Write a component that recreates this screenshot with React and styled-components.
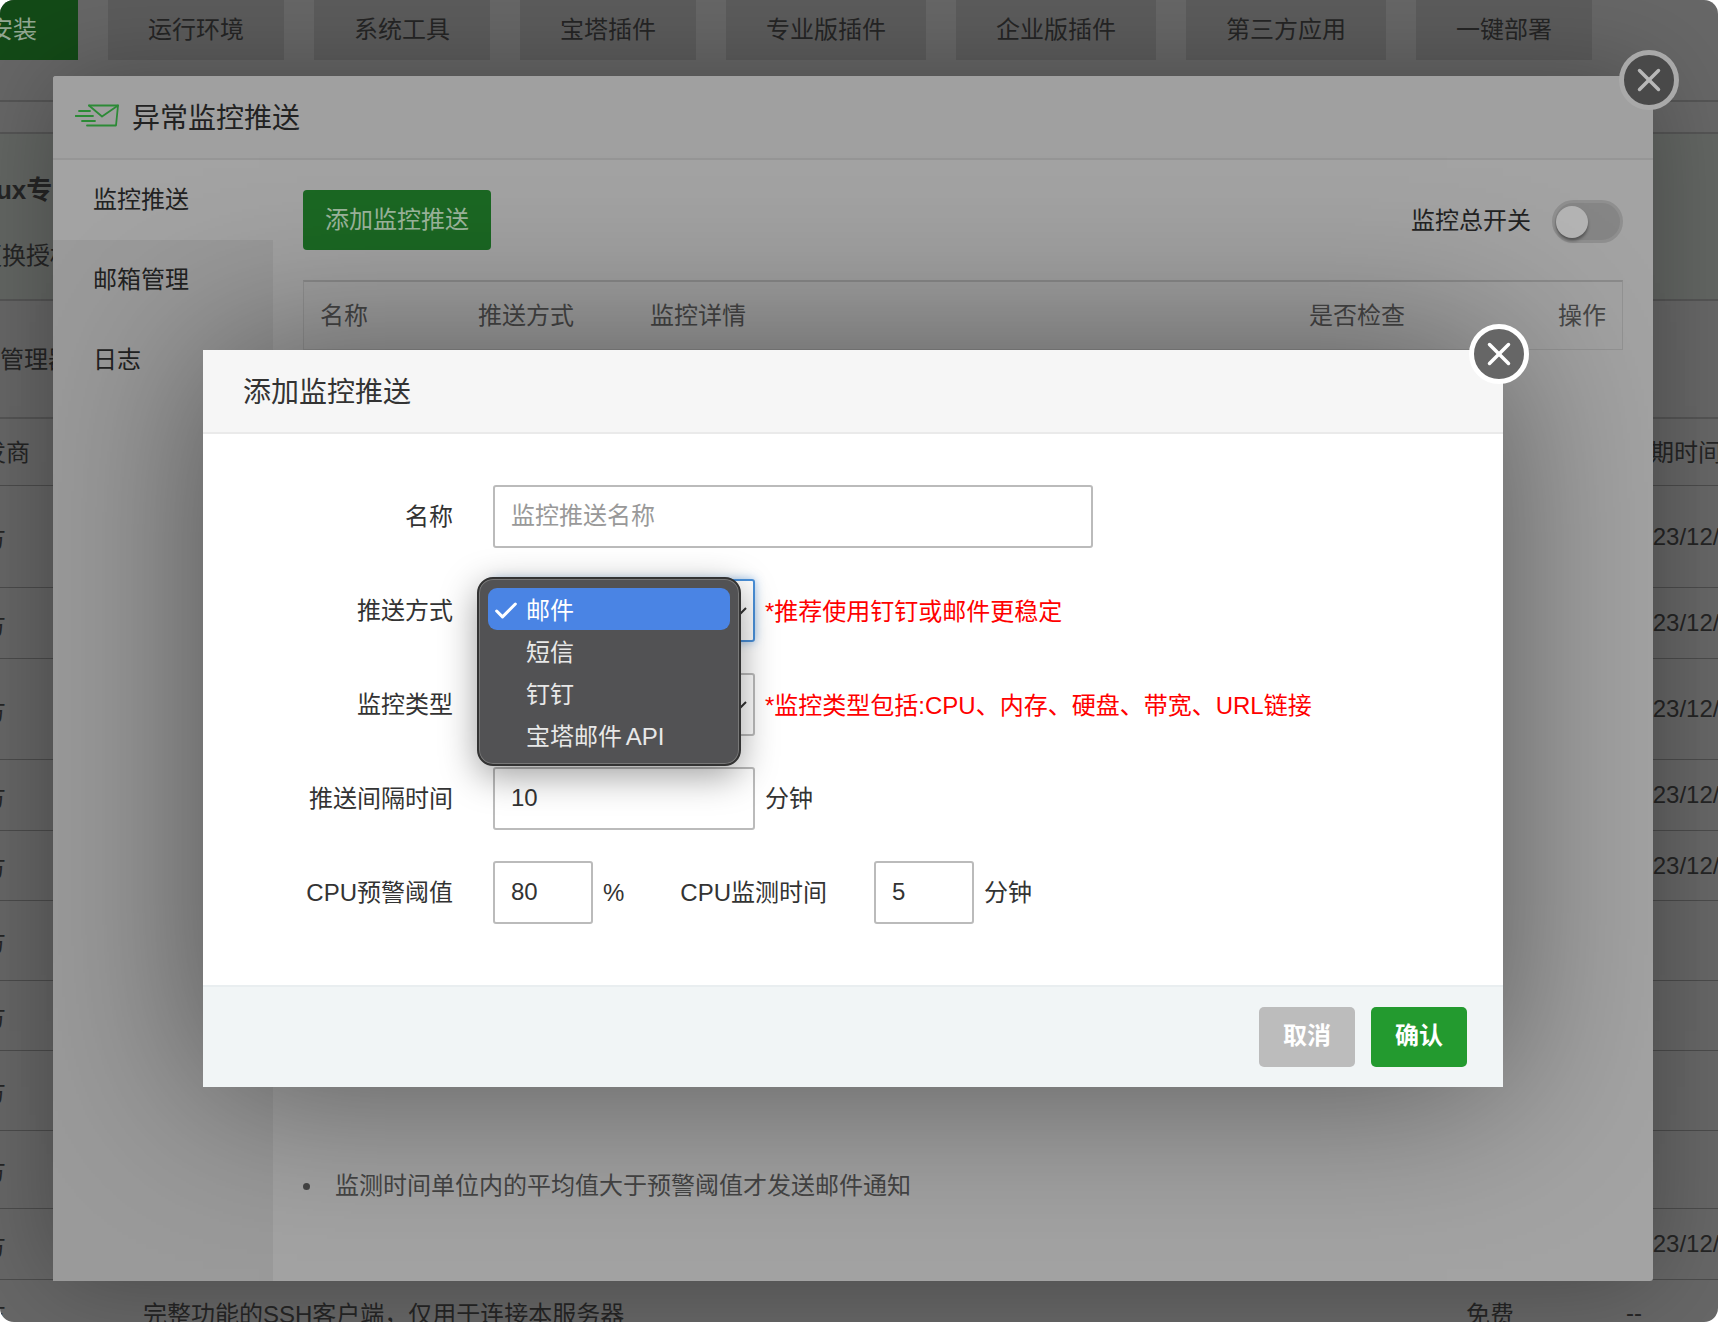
import * as React from "react";
import styled, { createGlobalStyle } from 'styled-components';
import { Check, X } from 'lucide-react';

const tabs = [
    { name: '运行环境', width: 176 },
    { name: '系统工具', width: 176 },
    { name: '宝塔插件', width: 176 },
    { name: '专业版插件', width: 200 },
    { name: '企业版插件', width: 200 },
    { name: '第三方应用', width: 200 },
    { name: '一键部署', width: 176 },
];

// heights are read off the page behind the dialogs
const softRows = [
    { height: 102, date: '2023/12/12' },
    { height: 71, date: '2023/12/12' },
    { height: 101, date: '2023/12/12' },
    { height: 71, date: '2023/12/12' },
    { height: 70, date: '2023/12/12' },
    { height: 80 },
    { height: 70 },
    { height: 80 },
    { height: 78 },
    { height: 71, date: '2023/12/12' },
];

const options = ['邮件', '短信', '钉钉', '宝塔邮件 API'];

const SendIcon = () => (
    <svg width="44" height="24" viewBox="0 0 44 24" fill="none" stroke="#2c8a36" strokeWidth="1.8" strokeLinecap="round" strokeLinejoin="round">
        <path d="M14 1.5H43L41 21.5H12" />
        <path d="M14 1.5L27 12.5L43 1.5" />
        <path d="M4 7H15M0.5 12H18M7 17H20" />
    </svg>
);

const Chevron = () => (
    <ChevronIcon width="20" height="12" viewBox="0 0 20 12" fill="none" stroke="#333" strokeWidth="2">
        <polyline points="1,1 10,10 19,1" />
    </ChevronIcon>
);

export default function App() {
    return (
        <>
            <GlobalStyle />
            <Page>
                <TabBar>
                    <InstallTab>安装</InstallTab>
                    {tabs.map(tab => <Tab key={tab.name} $width={tab.width}>{tab.name}</Tab>)}
                </TabBar>
                <Band $height={32} />
                <Band $height={167} $tint>
                    <BandTitle>Linux专业版</BandTitle>
                    <BandLink>更换授权</BandLink>
                </Band>
                <Band $height={118}>
                    <BandText>软件管理器</BandText>
                </Band>
                <SoftHead $height={67}>
                    <span>开发商</span>
                    <span />
                    <span />
                    <span>到期时间</span>
                </SoftHead>
                {softRows.map((row, i) => (
                    <SoftRow key={i} $height={row.height}>
                        <span>官方</span>
                        <span />
                        <span />
                        <span>{row.date}</span>
                    </SoftRow>
                ))}
                <SoftRow $height={66}>
                    <span>官方</span>
                    <span>完整功能的SSH客户端，仅用于连接本服务器</span>
                    <span>免费</span>
                    <span>--</span>
                </SoftRow>

                <OuterModal>
                    <OuterClose><X size={38} strokeWidth={2.2} /></OuterClose>
                    <OuterHeader>
                        <SendIcon />
                        <span>异常监控推送</span>
                    </OuterHeader>
                    <OuterBody>
                        <Sidebar>
                            <SideItem $active>监控推送</SideItem>
                            <SideItem>邮箱管理</SideItem>
                            <SideItem>日志</SideItem>
                        </Sidebar>
                        <Content>
                            <Toolbar>
                                <AddButton>添加监控推送</AddButton>
                                <SwitchWrap>
                                    <SwitchLabel>监控总开关</SwitchLabel>
                                    <Toggle><Knob /></Toggle>
                                </SwitchWrap>
                            </Toolbar>
                            <TableHead>
                                <span>名称</span>
                                <span>推送方式</span>
                                <span>监控详情</span>
                                <span>是否检查</span>
                                <span>操作</span>
                            </TableHead>
                            <Tips>
                                <li>监测时间单位内的平均值大于预警阈值才发送邮件通知</li>
                            </Tips>
                        </Content>
                    </OuterBody>
                </OuterModal>

                <Dialog>
                    <DialogClose><X size={38} strokeWidth={2.2} /></DialogClose>
                    <DialogTitle>添加监控推送</DialogTitle>
                    <Form>
                        <FormRow>
                            <Label>名称</Label>
                            <Input $width={600} placeholder="监控推送名称" readOnly />
                        </FormRow>
                        <FormRow>
                            <Label>推送方式</Label>
                            <SelectBox $focus>
                                <Chevron />
                                <Popup>
                                    {options.map((option, i) => (
                                        <Option key={option} $selected={i === 0}>
                                            <CheckSlot>{i === 0 && <Check size={28} strokeWidth={2.6} />}</CheckSlot>
                                            <OptionText>{option}</OptionText>
                                        </Option>
                                    ))}
                                </Popup>
                            </SelectBox>
                            <Note>*推荐使用钉钉或邮件更稳定</Note>
                        </FormRow>
                        <FormRow>
                            <Label>监控类型</Label>
                            <SelectBox>
                                <Chevron />
                            </SelectBox>
                            <Note>*监控类型包括:CPU、内存、硬盘、带宽、URL链接</Note>
                        </FormRow>
                        <FormRow>
                            <Label>推送间隔时间</Label>
                            <Input $width={262} defaultValue="10" readOnly />
                            <Unit>分钟</Unit>
                        </FormRow>
                        <FormRow>
                            <Label>CPU预警阈值</Label>
                            <Input $width={100} defaultValue="80" readOnly />
                            <PercentUnit>%</PercentUnit>
                            <InlineLabel>CPU监测时间</InlineLabel>
                            <Input $width={100} defaultValue="5" readOnly />
                            <Unit>分钟</Unit>
                        </FormRow>
                    </Form>
                    <Footer>
                        <FooterButton $color="#bcbcbc">取消</FooterButton>
                        <FooterButton $color="#239a2f">确认</FooterButton>
                    </Footer>
                </Dialog>
            </Page>
        </>
    );
};

const fontStack = `"Liberation Sans", "Noto Sans CJK SC", sans-serif`;

const GlobalStyle = createGlobalStyle`
    html, body {
        margin: 0;
        background: #fff;
    }

    * {
        box-sizing: border-box;
    }
`;

const Page = styled.div`
    position: relative;
    width: 1718px;
    height: 1322px;
    overflow: hidden;
    border-radius: 14px;
    background: #676767;
    color: #252525;
    font-family: ${fontStack};
    font-size: 24px;
`;

/* --- page behind the dialogs --- */

const TabBar = styled.div`
    display: flex;
    gap: 30px;
    height: 102px;
    border-bottom: 2px solid #555;
    margin-left: -30px;
`;

const Tab = styled.div`
    display: flex;
    align-items: center;
    justify-content: center;
    width: ${p => p.$width}px;
    height: 60px;
    padding-bottom: 6px;
    background: #5c5c5c;
`;

const InstallTab = styled(Tab)`
    width: 108px;
    padding-right: 22px;
    background: #134a17;
    color: #93a893;
`;

const Band = styled.div`
    display: flex;
    flex-direction: column;
    height: ${p => p.$height}px;
    border-bottom: 2px solid #555;
    background: ${p => p.$tint ? '#636663' : 'transparent'};
`;

const BandTitle = styled.div`
    margin: 35px 0 0 -43px;
    font-size: 26px;
    font-weight: 700;
    white-space: nowrap;
`;

const BandLink = styled.div`
    margin: 30px 0 0 -22px;
    white-space: nowrap;
`;

const BandText = styled.div`
    margin: 39px 0 0 -48px;
    white-space: nowrap;
`;

const SoftRow = styled.div`
    display: grid;
    grid-template-columns: 185px 1323px 160px 200px;
    align-items: center;
    height: ${p => p.$height}px;
    margin-left: -42px;
    border-bottom: 1px solid #4c4c4c;
    white-space: nowrap;
`;

const SoftHead = styled(SoftRow)`
    padding-bottom: 4px;
`;

/* --- monitoring modal --- */

const OuterModal = styled.div`
    position: absolute;
    top: 76px;
    left: 53px;
    display: flex;
    flex-direction: column;
    width: 1600px;
    height: 1205px;
    border-radius: 3px;
    background: #a3a3a3;
    box-shadow: 0 0 100px rgba(0, 0, 0, 0.3);
`;

const CloseButton = styled.div`
    position: absolute;
    top: -26px;
    right: -26px;
    display: flex;
    align-items: center;
    justify-content: center;
    width: 60px;
    height: 60px;
    border: 5px solid #a9a9a9;
    border-radius: 50%;
    background: #494949;
    color: #b8b8b8;
    z-index: 2;
`;

const OuterClose = styled(CloseButton)``;

const OuterHeader = styled.div`
    display: flex;
    align-items: center;
    gap: 13px;
    height: 84px;
    padding: 0 0 2px 22px;
    border-bottom: 2px solid #969696;
    background: #a0a0a0;
    border-radius: 3px 3px 0 0;
    font-size: 28px;
    color: #222;
`;

const OuterBody = styled.div`
    display: flex;
    flex: 1;
`;

const Sidebar = styled.div`
    width: 220px;
    background: #9a9a9a;
`;

const SideItem = styled.div`
    display: flex;
    align-items: center;
    height: 80px;
    padding: 0 0 5px 40px;
    background: ${p => p.$active ? '#a3a3a3' : 'transparent'};
    color: #222;
`;

const Content = styled.div`
    flex: 1;
    padding: 30px 30px 0 30px;
`;

const Toolbar = styled.div`
    display: flex;
    align-items: center;
    justify-content: space-between;
    height: 60px;
`;

const AddButton = styled.div`
    display: flex;
    align-items: center;
    justify-content: center;
    width: 188px;
    height: 60px;
    padding-bottom: 5px;
    border-radius: 4px;
    background: #1b6823;
    color: #9cb59c;
`;

const SwitchWrap = styled.div`
    display: flex;
    align-items: center;
    gap: 21px;
    color: #222;
`;

const SwitchLabel = styled.span`
    margin-bottom: 4px;
`;

const Toggle = styled.div`
    display: flex;
    align-items: center;
    width: 71px;
    height: 43px;
    margin-top: 3px;
    padding-left: 1px;
    border: 3px solid #8f8f8f;
    border-radius: 22px;
    background: #858585;
`;

const Knob = styled.div`
    width: 32px;
    height: 32px;
    border-radius: 50%;
    background: #b4b4b4;
    box-shadow: 0 3px 3px rgba(0, 0, 0, 0.35);
`;

const TableHead = styled.div`
    display: grid;
    grid-template-columns: 158px 172px 659px 249px 1fr;
    align-items: center;
    height: 70px;
    margin-top: 30px;
    padding: 0 0 4px 16px;
    border: 1px solid #939393;
    border-top: 2px solid #8b8b8b;
    background: #a2a2a2;
    color: #474747;
`;

const Tips = styled.ul`
    margin: 820px 0 0;
    padding: 0;
    list-style: none;
    line-height: 32px;
    color: #454545;

    li {
        display: flex;
        align-items: center;
        gap: 25px;
    }

    li::before {
        content: '';
        width: 7px;
        height: 7px;
        border-radius: 50%;
        background: #454545;
    }
`;

/* --- add dialog --- */

const Dialog = styled.div`
    position: absolute;
    top: 350px;
    left: 203px;
    display: flex;
    flex-direction: column;
    width: 1300px;
    height: 737px;
    background: #fff;
    color: #333;
    box-shadow: 0 0 160px rgba(0, 0, 0, 0.48);
`;

const DialogClose = styled(CloseButton)`
    border-color: #fff;
    background: #666;
    color: #fff;
`;

const DialogTitle = styled.div`
    display: flex;
    align-items: center;
    height: 84px;
    padding: 0 0 2px 40px;
    border-bottom: 2px solid #eaeaea;
    background: #f6f6f6;
    font-size: 28px;
`;

const Form = styled.div`
    display: flex;
    flex: 1;
    flex-direction: column;
    gap: 31px;
    padding-top: 51px;
`;

const FormRow = styled.div`
    display: flex;
    align-items: center;
    height: 63px;
`;

const Label = styled.div`
    width: 250px;
    margin-right: 40px;
    padding-bottom: 4px;
    text-align: right;
`;

const InlineLabel = styled.div`
    margin: 0 47px 0 56px;
    padding-bottom: 4px;
`;

const Input = styled.input`
    width: ${p => p.$width}px;
    height: 63px;
    padding: 0 16px 2px;
    border: 2px solid #bbb;
    border-radius: 3px;
    outline: none;
    background: #fff;
    color: #333;
    font-family: ${fontStack};
    font-size: 24px;

    &::placeholder {
        color: #999;
    }
`;

const SelectBox = styled.div`
    position: relative;
    display: flex;
    align-items: center;
    justify-content: flex-end;
    width: 262px;
    height: 63px;
    padding-right: 6px;
    border: 2px solid ${p => p.$focus ? '#4a90d9' : '#bbb'};
    border-radius: 3px;
    box-shadow: ${p => p.$focus ? '0 0 10px rgba(74, 144, 217, 0.55)' : 'none'};
`;

const ChevronIcon = styled.svg`
    margin-top: 4px;
`;

const Popup = styled.div`
    position: absolute;
    top: -4px;
    left: -18px;
    width: 264px;
    height: 189px;
    padding: 9px;
    border: 2px solid #333;
    border-radius: 16px;
    background: #525254;
    box-shadow: inset 0 0 0 1px #787878, 0 10px 36px rgba(0, 0, 0, 0.38);
    z-index: 3;
`;

const Option = styled.div`
    display: flex;
    align-items: center;
    height: 42px;
    border-radius: 9px;
    background: ${p => p.$selected ? '#4a84e4' : 'transparent'};
    color: ${p => p.$selected ? '#fff' : '#e8e8e8'};
`;

const CheckSlot = styled.div`
    display: flex;
    align-items: center;
    flex: none;
    width: 38px;
    padding: 4px 0 0 4px;
`;

const OptionText = styled.span`
    margin-bottom: 2px;
    word-spacing: -3px;
`;

const Note = styled.div`
    margin-left: 10px;
    padding-bottom: 2px;
    color: #f00;
`;

const Unit = styled.div`
    margin-left: 10px;
    padding-bottom: 4px;
`;

const PercentUnit = styled(Unit)`
    padding-bottom: 0;
`;

const Footer = styled.div`
    display: flex;
    justify-content: flex-end;
    gap: 16px;
    height: 102px;
    padding: 20px 36px 20px 0;
    border-top: 2px solid #e9eef0;
    background: #f1f5f6;
`;

const FooterButton = styled.div`
    display: flex;
    align-items: center;
    justify-content: center;
    width: 96px;
    height: 60px;
    padding-bottom: 8px;
    border-radius: 5px;
    background: ${p => p.$color};
    color: #fff;
    font-weight: 700;
`;
